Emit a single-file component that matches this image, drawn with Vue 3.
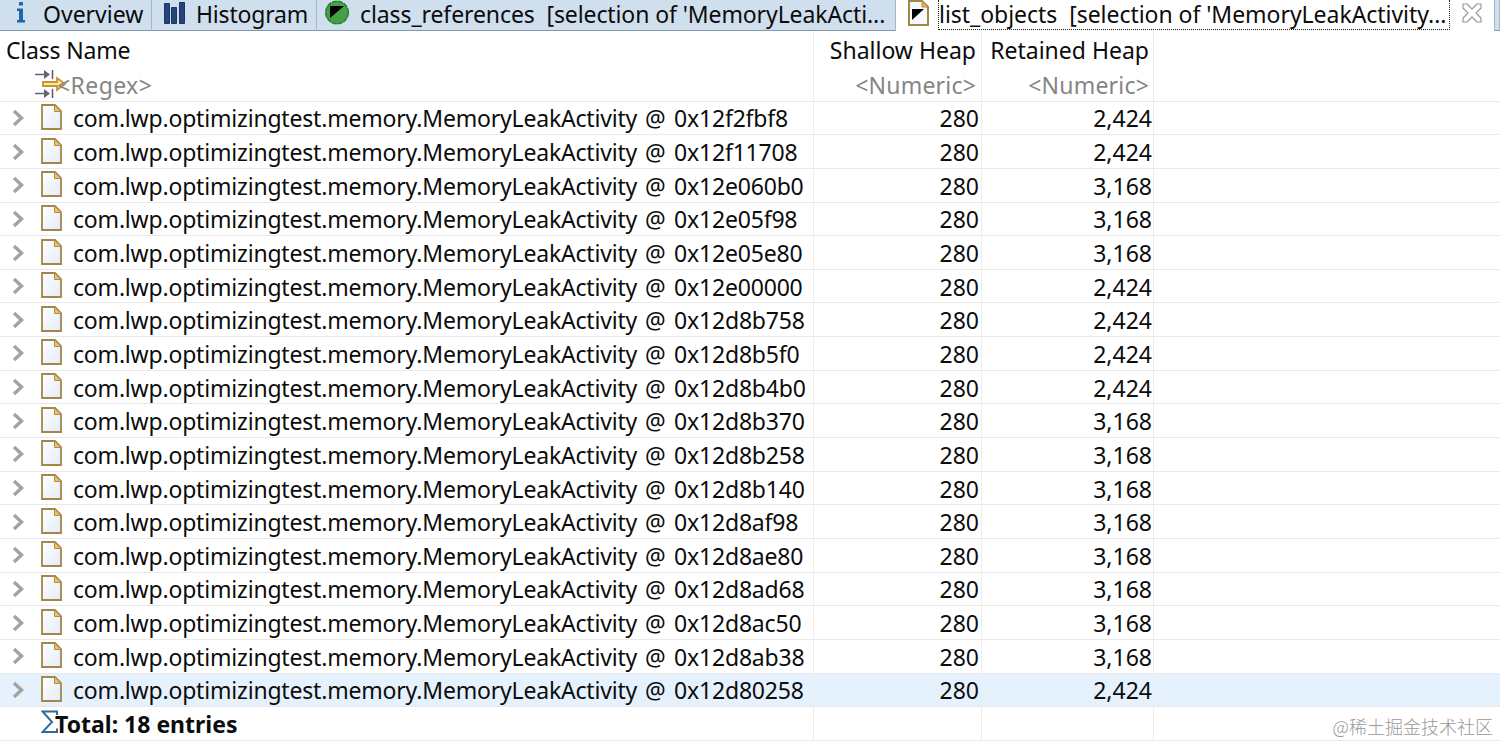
<template>
  <div class="viewer">
    <div class="tabs">
      <div class="tab overview">
        <svg class="tab-icon info" width="12" height="24" viewBox="0 0 12 24">
          <path d="M4 2h4v3.500H4zM2 8.500h6V20h2v2.500H2V20h2v-9H2z" fill="#1d66a8" />
        </svg>
        <span class="label">Overview</span>
      </div>
      <div class="tab histogram">
        <svg class="tab-icon" width="21" height="23" viewBox="0 0 21 23">
          <g fill="#294478" stroke="#1b3469" stroke-width="1">
            <path d="M.5 1.500h5v20h-5zM7.500 5.500h5v16h-5zM15.500.5h5v21h-5z" />
          </g>
        </svg>
        <span class="label">Histogram</span>
      </div>
      <div class="tab references">
        <svg class="tab-icon" width="26" height="26" viewBox="0 0 26 26">
          <circle cx="13" cy="12.500" r="11.500" fill="#43a047" />
          <circle cx="13" cy="12.500" r="11.300" fill="none" stroke="#2b7d33" stroke-width="1.500" stroke-dasharray="5 1" />
          <path d="M6 6h14L6 18z" fill="#000" />
        </svg>
        <span class="label">class_references&nbsp; [selection of 'MemoryLeakActi...</span>
      </div>
      <div class="tab objects">
        <svg class="tab-icon" width="21" height="26" viewBox="0 0 21 26">
          <path d="M1 1h13l6 6v18H1z" fill="#f5f8fd" stroke="#a28748" stroke-width="2" />
          <path d="M14 1v6h6z" fill="#e0b65e" stroke="#b98d38" />
          <path d="M4 9h12L4 20z" fill="#000" />
        </svg>
        <span class="label focused">list_objects&nbsp; [selection of 'MemoryLeakActivity...</span>
        <svg class="close" width="20" height="20" viewBox="0 0 20 20">
          <path d="M1 1h4l5 5 5-5h4v4l-5 5 5 5v4h-4l-5-5-5 5H1v-4l5-5-5-5z" fill="#fff" stroke="#999" stroke-width="1.200" stroke-linejoin="round" />
        </svg>
      </div>
      <div class="tab rest"></div>
    </div>

    <div class="grid">
      <div class="row head">
        <div class="cell name"><span class="title">Class Name</span></div>
        <div class="cell shallow"><span>Shallow Heap</span></div>
        <div class="cell retained"><span>Retained Heap</span></div>
      </div>
      <div class="row filter">
        <div class="cell name">
          <svg class="filter-icon" width="32" height="30" viewBox="0 0 32 30">
            <path d="M0 5.500h12M0 24.500h12" stroke="#5d6880" stroke-width="1.500" />
            <path d="M9 1l6 4.500L9 10zM9 20l6 4.500L9 29z" fill="#66666e" />
            <path d="M17.500 1v9M17.500 20v9" stroke="#555a68" stroke-width="1.500" />
            <path d="M8 13h14V9l8 6-8 6v-4H8z" fill="#ffe9a0" stroke="#c8942e" stroke-width="1.800" />
          </svg>
          <span class="regex">&lt;Regex&gt;</span>
        </div>
        <div class="cell shallow"><span>&lt;Numeric&gt;</span></div>
        <div class="cell retained"><span>&lt;Numeric&gt;</span></div>
      </div>

      <div v-for="item in items" :key="item.address" class="row" :class="{ selected: item.address === selected }" @click="selected = item.address">
        <div class="cell name">
          <svg class="arrow" width="12" height="18" viewBox="0 0 12 18">
            <path d="M2 2l7.500 7L2 16" fill="none" stroke="#a3a3a3" stroke-width="3.400" />
          </svg>
          <svg class="file" width="21" height="26" viewBox="0 0 21 26">
            <defs>
              <linearGradient id="paper" x1="0" y1="0" x2="1" y2="1">
                <stop offset="0" stop-color="#fff" />
                <stop offset="1" stop-color="#e4ebf8" />
              </linearGradient>
            </defs>
            <path d="M1 1h13l6 6v18H1z" fill="url(#paper)" stroke="#a28748" stroke-width="1.800" />
            <path d="M13.500 1v6.500H20z" fill="#e6c477" stroke="#b98d38" />
          </svg>
          <span class="class-name">{{ className }}</span>
          <span class="at">@</span>
          <span class="address">{{ item.address }}</span>
        </div>
        <div class="cell shallow"><span>280</span></div>
        <div class="cell retained"><span>{{ item.retained }}</span></div>
      </div>

      <div class="row total">
        <div class="cell name">
          <svg class="sigma" width="18" height="24" viewBox="0 0 18 24">
            <path d="M16 5V1.500H1.500L11 12 1.500 22H16v-3.500" fill="none" stroke="#35699c" stroke-width="2" />
          </svg>
          <span class="total-text">Total: 18 entries</span>
        </div>
        <div class="cell shallow"></div>
        <div class="cell retained"></div>
      </div>
    </div>
    <div class="watermark">@稀土掘金技术社区</div>
  </div>
</template>

<script setup>
import { ref } from 'vue';

const className = 'com.lwp.optimizingtest.memory.MemoryLeakActivity';
const selected = ref('0x12d80258');

const items = [
  { address: '0x12f2fbf8', retained: '2,424' },
  { address: '0x12f11708', retained: '2,424' },
  { address: '0x12e060b0', retained: '3,168' },
  { address: '0x12e05f98', retained: '3,168' },
  { address: '0x12e05e80', retained: '3,168' },
  { address: '0x12e00000', retained: '2,424' },
  { address: '0x12d8b758', retained: '2,424' },
  { address: '0x12d8b5f0', retained: '2,424' },
  { address: '0x12d8b4b0', retained: '2,424' },
  { address: '0x12d8b370', retained: '3,168' },
  { address: '0x12d8b258', retained: '3,168' },
  { address: '0x12d8b140', retained: '3,168' },
  { address: '0x12d8af98', retained: '3,168' },
  { address: '0x12d8ae80', retained: '3,168' },
  { address: '0x12d8ad68', retained: '3,168' },
  { address: '0x12d8ac50', retained: '3,168' },
  { address: '0x12d8ab38', retained: '3,168' },
  { address: '0x12d80258', retained: '2,424' },
];
</script>

<style>
body {
  margin: 0;
  background: #fff;
}
</style>

<style scoped>
.viewer {
  position: relative;
  width: 1500px;
  height: 742px;
  overflow: hidden;
  background: #fff;
  color: #0c0c0c;
  font-family: 'Noto Sans', 'Noto Sans CJK SC', sans-serif;
  font-size: 23px;
  line-height: 32px;
  white-space: nowrap;
}

.tabs {
  display: flex;
  height: 31px;
}

.tab {
  display: flex;
  align-items: flex-start;
  box-sizing: border-box;
  height: 31px;
  background: #d0dfed;
  border-right: 1px solid #a5b7c8;
  border-bottom: 1px solid #8597a7;
  flex-shrink: 0;
}

.tab-icon {
  flex-shrink: 0;
}

.label {
  height: 28px;
  line-height: 28px;
}

.overview {
  width: 152px;
  padding-left: 15px;
}

.overview .label {
  margin-left: 16px;
}

.histogram {
  width: 165px;
  padding-left: 12px;
}

.histogram .tab-icon {
  margin-top: 2px;
}

.histogram .label {
  margin-left: 11px;
  letter-spacing: -0.2px;
}

.references {
  width: 579px;
  padding-left: 7px;
}

.references .label {
  margin-left: 10px;
  letter-spacing: -0.1px;
}

.objects {
  width: 598px;
  padding-left: 12px;
  background: #fff;
  border-color: transparent;
}

.focused {
  box-sizing: border-box;
  width: 512px;
  height: 30px;
  margin-left: 9px;
  border: 1px dotted #222;
  border-top: none;
  letter-spacing: -0.04px;
}

.close {
  margin-top: 3px;
  margin-left: 12px;
}

.rest {
  flex: 1;
  border-left: 1px solid #a5b7c8;
}

.row {
  display: flex;
  box-sizing: border-box;
  height: 33.650px;
  border-bottom: 1px solid #e9e9e9;
}

.head {
  height: 37px;
  border-bottom: none;
}

.filter {
  color: #858585;
}

.selected {
  background: #e5f2fd;
}

.cell {
  display: flex;
  align-items: center;
  box-sizing: border-box;
  border-right: 1px solid #ededed;
}

.cell span {
  margin-top: 1px;
}

.name {
  width: 814px;
}

.shallow {
  width: 168px;
  justify-content: flex-end;
  padding-right: 2px;
}

.retained {
  width: 172px;
  justify-content: flex-end;
  padding-right: 1px;
}

.head .shallow,
.filter .shallow {
  padding-right: 5px;
}

.head .retained,
.filter .retained {
  padding-right: 4px;
}

.filter .shallow span,
.filter .retained span {
  letter-spacing: 0.2px;
}

.title {
  margin-left: 6px;
  letter-spacing: -0.2px;
}

.filter-icon {
  margin-left: 35px;
  flex-shrink: 0;
}

.regex {
  margin-left: -10px;
  letter-spacing: 0.4px;
}

.arrow {
  margin-left: 12px;
}

.file {
  margin-left: 17px;
  margin-bottom: 2px;
}

.class-name {
  width: 564px;
  margin-left: 11px;
  letter-spacing: -0.19px;
}

.at {
  width: 21px;
  margin-left: 8px;
}

.address {
  margin-left: 8px;
  letter-spacing: -0.18px;
}

.sigma {
  margin-left: 41px;
  margin-bottom: 3px;
}

.total-text {
  margin-left: -4px;
  font-weight: 700;
}

.watermark {
  position: absolute;
  right: 7px;
  bottom: 1px;
  color: #999;
  font-family: 'Noto Sans CJK SC', sans-serif;
  font-size: 18px;
  font-weight: 300;
  line-height: 30px;
}
</style>
